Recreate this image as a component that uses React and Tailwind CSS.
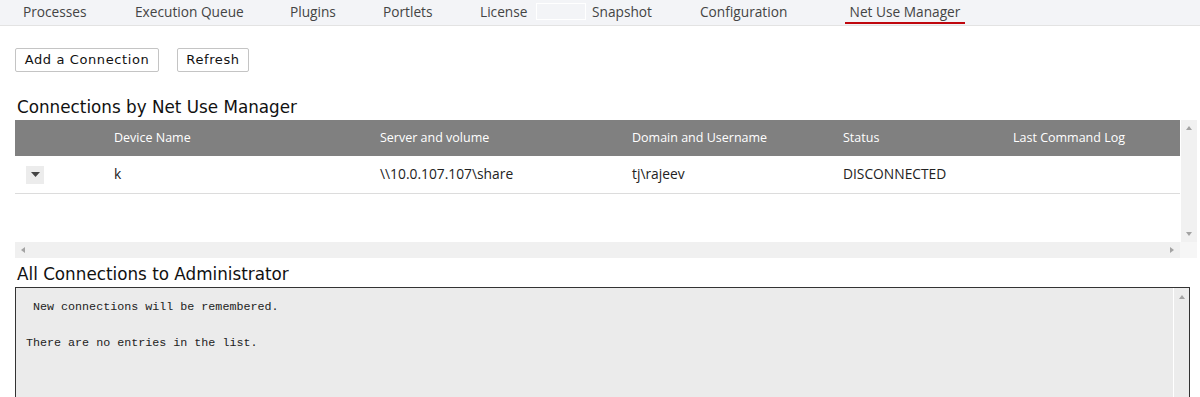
import React from 'react';

const tabs = [
  { label: 'Processes', w: 'w-[112px]' },
  { label: 'Execution Queue', w: 'w-[155px]' },
  { label: 'Plugins', w: 'w-[93px]' },
  { label: 'Portlets', w: 'w-[97px]' },
  { label: 'License', w: 'w-[56px]' },
];

const cols = ['Device Name', 'Server and volume', 'Domain and Username', 'Status', 'Last Command Log'];
const colW = ['w-[266px]', 'w-[252px]', 'w-[211px]', 'w-[170px]', 'flex-1'];

function ScrollArrow({ dir }) {
  const shapes = {
    up: 'M1 5 L4 1 L7 5 Z',
    down: 'M1 1 L4 5 L7 1 Z',
    left: 'M5 1 L1 4 L5 7 Z',
    right: 'M1 1 L5 4 L1 7 Z',
  };
  const vertical = dir === 'up' || dir === 'down';
  return (
    <svg width={vertical ? 8 : 6} height={vertical ? 6 : 8} viewBox={vertical ? '0 0 8 6' : '0 0 6 8'}>
      <path d={shapes[dir]} fill="#a3a3a3" />
    </svg>
  );
}

export default function App() {
  return (
    <div className="w-[1200px] h-[397px] overflow-hidden bg-white text-[#333]">
      {/* Tab bar */}
      <div className="h-[26px] bg-[#f3f4f7] border-b border-[#e3e3e3] flex items-stretch pl-[23px] font-['Open_Sans',sans-serif] text-[13.7px] text-[#444]">
        {tabs.map((t) => (
          <div key={t.label} className={`${t.w} flex items-center`}>{t.label}</div>
        ))}
        <div className="w-[50px] h-[17px] mt-[3px] border border-white mr-[6px]" />
        <div className="w-[108px] flex items-center">Snapshot</div>
        <div className="w-[145px] flex items-center">Configuration</div>
        <div className="w-[120px] flex items-center justify-center relative">
          Net Use Manager
          <div className="absolute left-0 right-0 bottom-[1px] h-[2px] bg-[#c0070e]" />
        </div>
      </div>

      {/* Buttons */}
      <div className="flex gap-[18px] pl-[15px] pt-[22px] font-['DejaVu_Sans',Verdana,sans-serif] text-[13px] tracking-[0.6px] text-[#111]">
        <button className="h-[24px] w-[144px] border border-[#c4c4c4] rounded-[2px] bg-white">Add a Connection</button>
        <button className="h-[24px] w-[72px] border border-[#c4c4c4] rounded-[2px] bg-white">Refresh</button>
      </div>

      <h2 className="pl-[17px] mt-[24px] mb-[2px] font-['DejaVu_Sans',Verdana,sans-serif] text-[16.8px] leading-[22px] text-[#111]">
        Connections by Net Use Manager
      </h2>

      {/* Table */}
      <div className="ml-[15px] mr-[3px] flex flex-col">
        <div className="flex">
          <div className="flex-1 h-[122px] flex flex-col font-['Open_Sans',sans-serif] text-[12.5px]">
            <div className="h-[36px] bg-[#808080] text-white flex items-center">
              <div className="w-[99px] shrink-0" />
              {cols.map((c, i) => (
                <div key={c} className={`${colW[i]} shrink-0`}>{c}</div>
              ))}
            </div>
            <div className="h-[38px] border-b border-[#dcdcdc] flex items-center text-[13.8px] text-[#222]">
              <div className="w-[99px] shrink-0 pl-[11px]">
                <div className="w-[18px] h-[18px] bg-[#ececec] flex items-center justify-center">
                  <svg width="9" height="5" viewBox="0 0 9 5"><path d="M0 0 L9 0 L4.5 5 Z" fill="#444" /></svg>
                </div>
              </div>
              <div className={`${colW[0]} shrink-0`}>k</div>
              <div className={`${colW[1]} shrink-0`}>\\10.0.107.107\share</div>
              <div className={`${colW[2]} shrink-0`}>tj\rajeev</div>
              <div className={`${colW[3]} shrink-0`}>DISCONNECTED</div>
              <div className="flex-1" />
            </div>
          </div>
          <div className="w-[17px] h-[122px] bg-[#f1f1f1] border-l border-white flex flex-col justify-between items-center py-[5px]">
            <ScrollArrow dir="up" />
            <ScrollArrow dir="down" />
          </div>
        </div>
        <div className="flex h-[16px]">
          <div className="flex-1 bg-[#f0f0f0] flex items-center justify-between px-[5px]">
            <ScrollArrow dir="left" />
            <ScrollArrow dir="right" />
          </div>
          <div className="w-[17px] bg-[#f6f6f6]" />
        </div>
      </div>

      <h2 className="pl-[17px] mt-[4px] font-['DejaVu_Sans',Verdana,sans-serif] text-[16.8px] leading-[25px] text-[#111]">
        All Connections to Administrator
      </h2>

      {/* Output box */}
      <div className="ml-[15px] mr-[10px] h-[120px] border border-[#333] bg-[#ebebeb] flex">
        <pre className="flex-1 pl-[10px] pt-[10px] font-['Liberation_Mono',monospace] text-[11.7px] leading-[18px] text-[#222]">
{' New connections will be remembered.\n\nThere are no entries in the list.'}
        </pre>
        <div className="w-[16px] border-l border-white bg-[#ececec] flex justify-center pt-[6px]">
          <ScrollArrow dir="up" />
        </div>
      </div>
    </div>
  );
}
